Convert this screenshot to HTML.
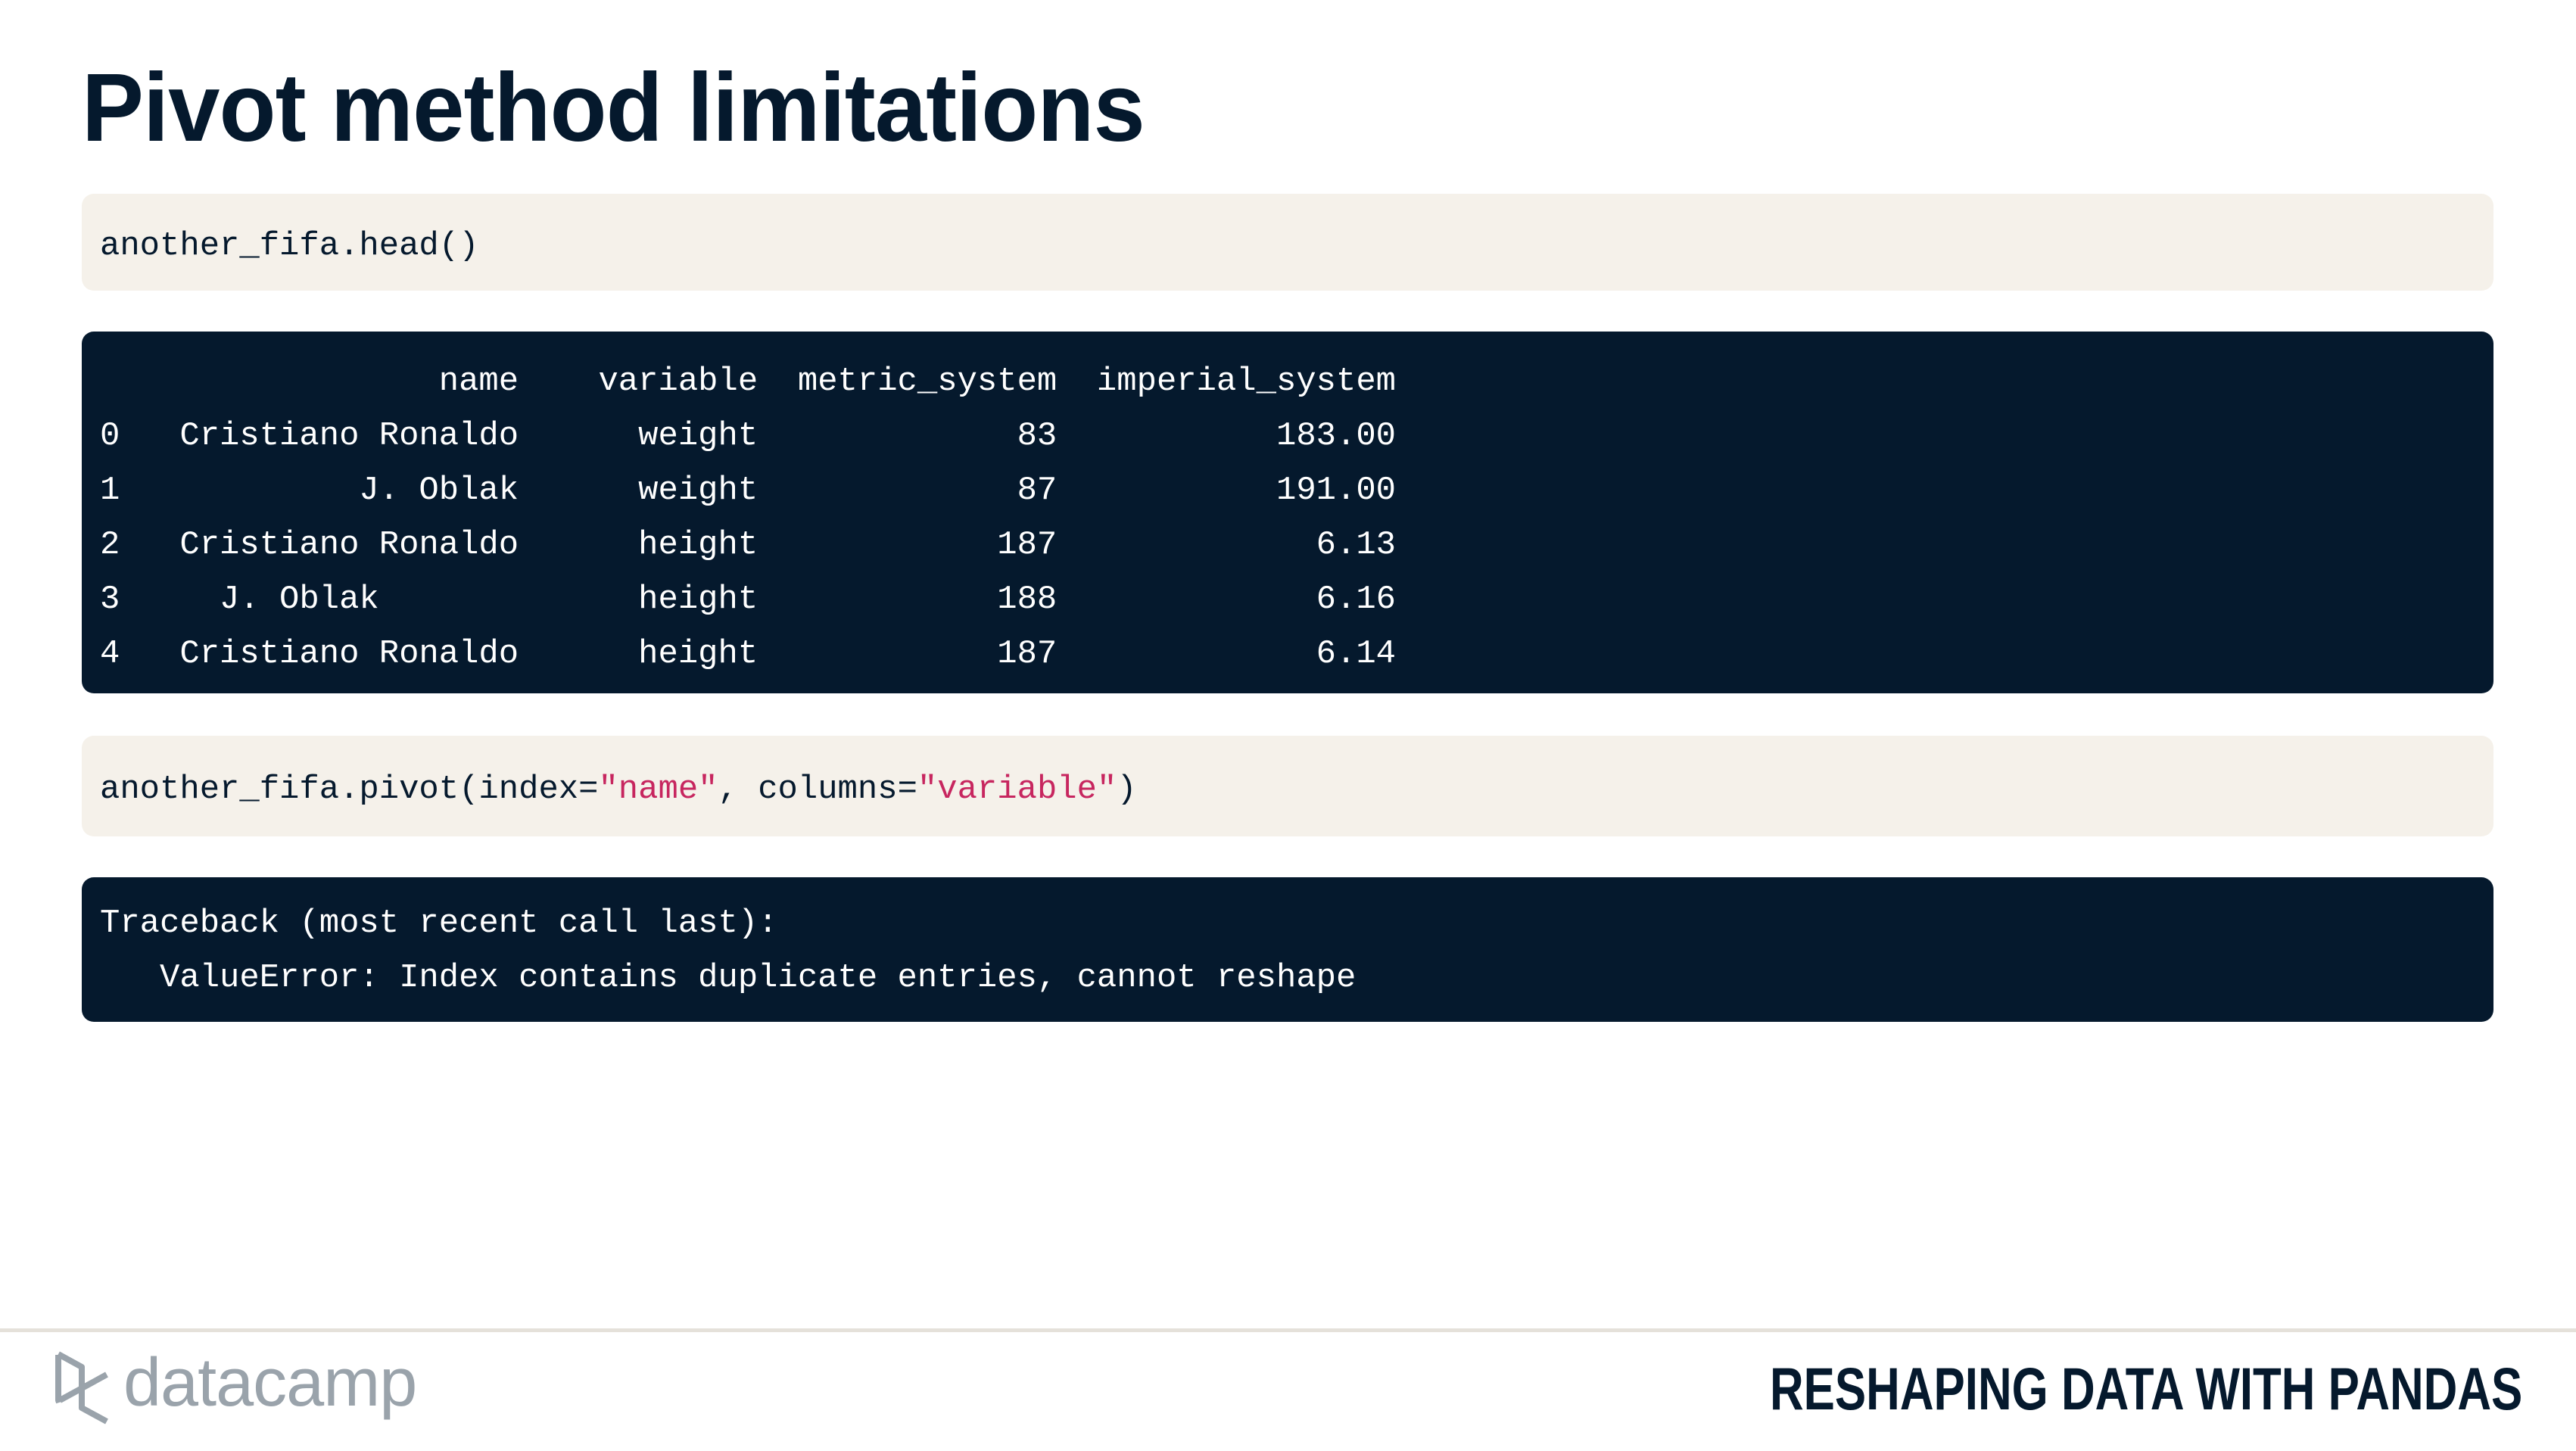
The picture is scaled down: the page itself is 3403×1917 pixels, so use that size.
<!DOCTYPE html>
<html><head><meta charset="utf-8"><style>
html,body{margin:0;padding:0;background:#fff;}
body{width:3403px;height:1917px;position:relative;overflow:hidden;font-family:"Liberation Sans",sans-serif;}
.title{position:absolute;left:108px;top:58px;font-size:128px;font-weight:bold;color:#05192d;white-space:nowrap;transform:scaleX(0.96);transform-origin:left top;line-height:170px;letter-spacing:-1px;}
.box{position:absolute;left:108px;width:3186px;border-radius:16px;}
.light{background:#f5f1ea;}
.dark{background:#05192d;}
pre{margin:0;position:absolute;left:24px;font-family:"Liberation Mono",monospace;font-size:43.9px;line-height:72px;}
.light pre{color:#05192d;}
.dark pre{color:#fff;}
.s{color:#c7265f;}
.line{position:absolute;left:0;top:1755px;width:3403px;height:5px;background:#e5e1da;}
.foot{position:absolute;left:2338px;top:1785px;font-size:79px;font-weight:bold;color:#05192d;white-space:nowrap;transform:scaleX(0.783);transform-origin:left top;line-height:100px;}
.logo{position:absolute;left:163px;top:1772px;font-size:90px;color:#9aa3ab;letter-spacing:-1px;line-height:110px;}
</style></head><body>
<div class="title">Pivot method limitations</div>

<div class="box light" style="top:256px;height:128px;"><pre style="top:33px;">another_fifa.head()</pre></div>

<div class="box dark" style="top:438px;height:478px;"><pre style="top:30px;">                 name    variable  metric_system  imperial_system
0   Cristiano Ronaldo      weight             83           183.00
1            J. Oblak      weight             87           191.00
2   Cristiano Ronaldo      height            187             6.13
3     J. Oblak             height            188             6.16
4   Cristiano Ronaldo      height            187             6.14</pre></div>

<div class="box light" style="top:972px;height:133px;"><pre style="top:35px;">another_fifa.pivot(index=<span class="s">"name"</span>, columns=<span class="s">"variable"</span>)</pre></div>

<div class="box dark" style="top:1159px;height:191px;"><pre style="top:25px;">Traceback (most recent call last):
   ValueError: Index contains duplicate entries, cannot reshape</pre></div>

<div class="line"></div>
<svg style="position:absolute;left:0;top:1750px" width="160" height="160" viewBox="0 1750 160 160">
<g fill="none" stroke="#9aa3ab" stroke-width="8" stroke-linejoin="round" stroke-linecap="butt">
<path d="M77 1790 L77 1850 L78 1853"/>
<path d="M77 1789 L108 1806 L108 1860 L141 1878"/>
<path d="M79 1850 L141 1816"/>
</g></svg>
<div class="logo">datacamp</div>
<div class="foot">RESHAPING DATA WITH PANDAS</div>
</body></html>
